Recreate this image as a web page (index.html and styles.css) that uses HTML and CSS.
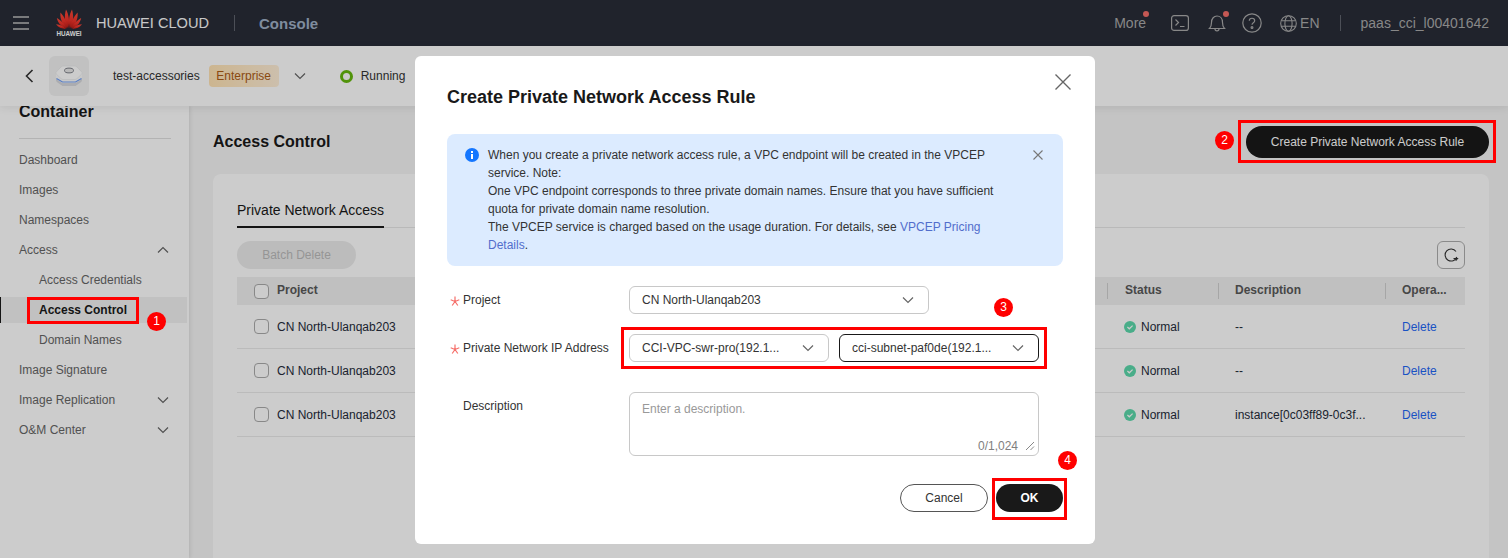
FILE: index.html
```html
<!DOCTYPE html>
<html lang="en">
<head>
<meta charset="utf-8">
<title>Create Private Network Access Rule</title>
<link rel="stylesheet" href="styles.css">
</head>
<body>
<svg class="defs" width="0" height="0" aria-hidden="true">
  <defs>
    <linearGradient id="petal-fill" x1="0" y1="0" x2="0" y2="1"><stop offset="0" stop-color="#ff4a38"/><stop offset=".55" stop-color="#f0332a"/><stop offset="1" stop-color="#b81c16"/></linearGradient>
  </defs>
  <symbol id="down" viewBox="0 0 12 8"><path d="M1 1.500 6 6.500 11 1.500" fill="none" stroke="currentColor" stroke-width="1.200"/></symbol>
  <symbol id="up" viewBox="0 0 12 8"><path d="M1 6.500 6 1.500 11 6.500" fill="none" stroke="currentColor" stroke-width="1.200"/></symbol>
  <symbol id="ok" viewBox="0 0 12 12"><circle cx="6" cy="6" r="6" fill="#5cd9ac"/><path d="M3.400 6 5.300 7.800 8.600 4.600" fill="none" stroke="#fff" stroke-width="1.200"/></symbol>
  <symbol id="req" viewBox="0 0 10 10"><path d="M5 .5v5M5 5.500.7 3.800M5 5.500 9.300 3.800M5 5.500 2.200 9.500M5 5.500 7.800 9.500" fill="none" stroke="#f66f6a" stroke-width="1.200"/></symbol>
</svg>
<div class="page">
  <header class="topbar">
    <svg class="burger" width="16" height="14" viewBox="0 0 16 14"><path d="M0 1h16M0 7h16M0 13h16" stroke="#bdbdbd" stroke-width="1.500"/></svg>
    <div class="logo">
      <svg width="26" height="20" viewBox="0 0 26 23" preserveAspectRatio="none" fill="url(#petal-fill)">
        <path d="M12.200 22C9 17 7.800 9 10 .5 12.800 6 14 15 12.200 22Z"/>
        <path d="M13.800 22C17 17 18.200 9 16 .5 13.200 6 12 15 13.800 22Z"/>
        <path d="M11.300 22C6.800 18.500 3.800 12 4.400 4 8.500 9 11.500 16 11.300 22Z"/>
        <path d="M14.700 22C19.200 18.500 22.200 12 21.600 4 17.500 9 14.500 16 14.700 22Z"/>
        <path d="M10.700 22.300C6 20.500 2 17 .8 10.300 5.300 13.500 9.500 18 10.700 22.300Z"/>
        <path d="M15.300 22.300C20 20.500 24 17 25.200 10.300 20.700 13.500 16.500 18 15.300 22.300Z"/>
        <path d="M10 22.800C6.500 23.200 2.500 21.500 0 17.500 4.500 18 8 20 10 22.800Z"/>
        <path d="M16 22.800C19.500 23.200 23.500 21.500 26 17.500 21.500 18 18 20 16 22.800Z"/>
      </svg>
      <span class="logo-word">HUAWEI</span>
    </div>
    <span class="brand">HUAWEI CLOUD</span>
    <i class="top-sep"></i>
    <span class="console">Console</span>
    <div class="top-right">
      <span class="more">More<i class="dot"></i></span>
      <svg class="ic-term" width="18" height="16" viewBox="0 0 18 16" fill="none" stroke="#aaa" stroke-width="1.200"><rect x=".6" y=".6" width="16.800" height="14.800" rx="2.500"/><path d="M4.500 4.500 7.500 7.500 4.500 10.500M9 11.500h4.500"/></svg>
      <span class="bell">
        <svg width="18" height="19" viewBox="0 0 18 19" fill="none" stroke="#aaa" stroke-width="1.200"><path d="M1.500 14.500c1.500-1.500 2-3 2-6C3.500 4.500 6 2 9 2s5.500 2.500 5.500 6.500c0 3 .5 4.500 2 6ZM7 15c0 2.500 4 2.500 4 0"/></svg>
        <i class="dot"></i>
      </span>
      <svg class="ic-help" width="20" height="20" viewBox="0 0 20 20" fill="none" stroke="#aaa" stroke-width="1.200"><circle cx="10" cy="10" r="9.200"/><path d="M7.300 7.800c0-3.400 5.400-3.400 5.400 0 0 2-2.700 2-2.700 4"/><circle cx="10" cy="14.500" r=".9"/></svg>
      <svg class="ic-globe" width="17" height="17" viewBox="0 0 17 17" fill="none" stroke="#aaa" stroke-width="1.100"><circle cx="8.500" cy="8.500" r="7.800"/><ellipse cx="8.500" cy="8.500" rx="3.600" ry="7.800"/><path d="M1.500 5.800h14M1.500 11.200h14"/></svg>
      <span class="lang">EN</span>
      <i class="top-sep right"></i>
      <span class="user">paas_cci_l00401642</span>
    </div>
  </header>

  <section class="subbar">
    <svg class="back" width="9" height="14" viewBox="0 0 9 14"><path d="M7.500 1 1.500 7 7.500 13" fill="none" stroke="#333" stroke-width="1.600"/></svg>
    <div class="instance-icon">
      <svg width="28" height="22" viewBox="0 0 28 22">
        <path d="M1 9.500v5.500q0 1.500 1.500 2.500l5 3.500h13l5-3.500q1.500-1 1.500-2.500V9.500Z" fill="#d6d8dc"/>
        <path d="M1 8v4.500q0 1.500 1.500 2.500l5 3h13l5-3q1.500-1 1.500-2.500V8Z" fill="#fbfbfb"/>
        <path d="M1.500 13.500 7.500 17h13l6-3.500" fill="none" stroke="#6f9df5" stroke-width="1.200"/>
        <path d="M8 1h12q1 0 2 1l4.800 5q1 1 0 2L22 13.500q-1 1-2 1H8q-1 0-2-1L1.200 9q-1-1 0-2L6 2q1-1 2-1Z" fill="#fff" stroke="#e4e5e8" stroke-width=".6"/>
        <ellipse cx="14" cy="5.500" rx="4.500" ry="2.400" fill="#e8e8e8" stroke="#7d8088" stroke-width="1"/>
      </svg>
    </div>
    <span class="inst-name">test-accessories</span>
    <span class="edition">Enterprise</span>
    <svg class="sub-chev" width="12" height="8"><use href="#down"/></svg>
    <i class="run-ring"></i>
    <span class="run-text">Running</span>
  </section>

  <main class="body">
    <nav class="side">
      <h2 class="side-title">Container</h2>
      <ul class="menu">
        <li class="menu-item">Dashboard</li>
        <li class="menu-item">Images</li>
        <li class="menu-item">Namespaces</li>
        <li class="menu-item">Access<svg width="12" height="8"><use href="#up"/></svg></li>
        <li class="menu-item sub">Access Credentials</li>
        <li class="menu-item sub active">Access Control</li>
        <li class="menu-item sub">Domain Names</li>
        <li class="menu-item">Image Signature</li>
        <li class="menu-item">Image Replication<svg width="12" height="8"><use href="#down"/></svg></li>
        <li class="menu-item">O&amp;M Center<svg width="12" height="8"><use href="#down"/></svg></li>
      </ul>
    </nav>
    <div class="content">
      <div class="title-row">
        <h1 class="page-title">Access Control</h1>
        <button class="btn-primary wide">Create Private Network Access Rule</button>
      </div>
      <div class="card">
        <div class="tabs"><span class="tab">Private Network Access</span></div>
        <div class="toolbar">
          <button class="btn-disabled">Batch Delete</button>
          <button class="btn-refresh" aria-label="Refresh">
            <svg width="16" height="16" viewBox="0 0 16 16" fill="none" stroke="#333" stroke-width="1.100"><path d="M13.800 10A6 6 0 1 1 13 4.500"/><path d="M10.500 11.500h4l-1.800 2.200"/></svg>
          </button>
        </div>
        <table class="grid">
          <colgroup><col class="c-check"><col class="c-project"><col class="c-status"><col class="c-desc"><col class="c-op"></colgroup>
          <thead>
            <tr><th><i class="check"></i></th><th>Project</th><th class="sep">Status</th><th class="sep tight">Description</th><th class="sep tight">Opera...</th></tr>
          </thead>
          <tbody>
            <tr><td><i class="check"></i></td><td>CN North-Ulanqab203</td><td class="pad"><svg class="ok-ic" width="12" height="12"><use href="#ok"/></svg>Normal</td><td class="pad">--</td><td class="pad"><a class="del">Delete</a></td></tr>
            <tr><td><i class="check"></i></td><td>CN North-Ulanqab203</td><td class="pad"><svg class="ok-ic" width="12" height="12"><use href="#ok"/></svg>Normal</td><td class="pad">--</td><td class="pad"><a class="del">Delete</a></td></tr>
            <tr><td><i class="check"></i></td><td>CN North-Ulanqab203</td><td class="pad"><svg class="ok-ic" width="12" height="12"><use href="#ok"/></svg>Normal</td><td class="pad">instance[0c03ff89-0c3f...</td><td class="pad"><a class="del">Delete</a></td></tr>
          </tbody>
        </table>
      </div>
    </div>
  </main>

  <div class="mask"></div>

  <div class="modal">
    <svg class="modal-close" width="16" height="16" viewBox="0 0 16 16"><path d="M.5.500l15 15M15.500.500l-15 15" stroke="#666" stroke-width="1.400"/></svg>
    <h3 class="modal-title">Create Private Network Access Rule</h3>
    <div class="alert">
      <svg class="alert-ic" width="14" height="14" viewBox="0 0 14 14"><circle cx="7" cy="7" r="7" fill="#1476ff"/><rect x="6" y="6" width="2" height="5" fill="#fff"/><rect x="6" y="3" width="2" height="2" fill="#fff"/></svg>
      <p class="alert-text">When you create a private network access rule, a VPC endpoint will be created in the VPCEP service. Note:<br>One VPC endpoint corresponds to three private domain names. Ensure that you have sufficient quota for private domain name resolution.<br>The VPCEP service is charged based on the usage duration. For details, see <a class="link">VPCEP Pricing Details</a>.</p>
      <svg class="alert-x" width="10" height="10" viewBox="0 0 10 10"><path d="M.5.500l9 9M9.500.500l-9 9" stroke="#777" stroke-width="1.100"/></svg>
    </div>
    <div class="form-row">
      <label class="lbl"><svg class="star" width="10" height="10"><use href="#req"/></svg>Project</label>
      <div class="select s-project"><span>CN North-Ulanqab203</span><svg width="12" height="8"><use href="#down"/></svg></div>
    </div>
    <div class="form-row">
      <label class="lbl"><svg class="star" width="10" height="10"><use href="#req"/></svg>Private Network IP Address</label>
      <div class="select s-half"><span>CCI-VPC-swr-pro(192.1...</span><svg width="12" height="8"><use href="#down"/></svg></div>
      <div class="select s-half focus"><span>cci-subnet-paf0de(192.1...</span><svg width="12" height="8"><use href="#down"/></svg></div>
    </div>
    <div class="form-row tall">
      <label class="lbl plain">Description</label>
      <div class="textarea">
        <span class="ph">Enter a description.</span>
        <span class="count">0/1,024
          <svg width="10" height="10" viewBox="0 0 10 10"><path d="M1 9 9 1M5.500 9 9 5.500" stroke="#888" stroke-width="1"/></svg>
        </span>
      </div>
    </div>
    <div class="modal-foot">
      <button class="btn-cancel">Cancel</button>
      <button class="btn-primary ok">OK</button>
    </div>
  </div>

  <i class="mark m1"></i><i class="mark m2"></i><i class="mark m3"></i><i class="mark m4"></i>
  <span class="badge b1">1</span><span class="badge b2">2</span><span class="badge b3">3</span><span class="badge b4">4</span>
</div>
</body>
</html>
```

FILE: styles.css
```css
* { box-sizing: border-box; }
html, body { margin: 0; height: 100%; }
body { font-family: "Liberation Sans", Arial, sans-serif; font-size: 12px; color: #252b3a; overflow: hidden; }
.defs { position: absolute; }
i { font-style: normal; }
button { font-family: inherit; cursor: pointer; }
h1, h2, h3, p, ul { margin: 0; padding: 0; }

.page { position: relative; width: 1508px; height: 558px; overflow: hidden; background: #f5f5f5; display: flex; flex-direction: column; }

/* top bar */
.topbar { flex: none; height: 46px; background: #282c38; display: flex; align-items: center; padding-left: 13px; }
.burger { flex: none; }
.logo { margin-left: 27px; width: 26px; display: flex; flex-direction: column; align-items: center; }
.logo-word { color: #fff; font-size: 6.300px; font-weight: 700; line-height: 8px; margin-top: 1px; white-space: nowrap; }
.brand { margin-left: 14px; color: #fafafa; font-size: 14.600px; }
.top-sep { width: 1px; height: 16px; background: #5f636d; margin-left: 25px; }
.console { margin-left: 24px; color: #9fb0c6; font-size: 15px; font-weight: 700; }
.top-right { margin-left: auto; display: flex; align-items: center; padding-right: 19px; color: #aaa; font-size: 14px; }
.more { position: relative; }
.dot { position: absolute; width: 6px; height: 6px; border-radius: 50%; background: #f66f6a; }
.more .dot { right: -3px; top: -4px; }
.ic-term { margin-left: 25px; }
.bell { position: relative; margin-left: 19px; display: flex; }
.bell .dot { right: -3px; top: -3px; }
.ic-help { margin-left: 16px; }
.ic-globe { margin-left: 18px; }
.lang { margin-left: 3px; }
.top-sep.right { margin-left: 20px; }
.user { margin-left: 20px; }

/* instance bar */
.subbar { flex: none; position: relative; z-index: 2; height: 60px; background: #fff; display: flex; align-items: center; padding-left: 25px; box-shadow: 0 2px 8px rgba(0,0,0,.08); color: #333; }
.instance-icon { margin-left: 15px; width: 40px; height: 40px; border-radius: 6px; background: #f2f2f2; display: flex; align-items: center; justify-content: center; }
.inst-name { margin-left: 24px; }
.edition { margin-left: 9px; height: 22px; width: 70px; border-radius: 4px; background: linear-gradient(90deg, #ffe3b4, #ffefd8); color: #ac5c16; display: flex; align-items: center; justify-content: center; }
.sub-chev { margin-left: 15px; color: #666; }
.run-ring { margin-left: 34px; width: 13px; height: 13px; border-radius: 50%; border: 3px solid #66b80d; }
.run-text { margin-left: 8px; }

/* layout */
.body { flex: 1; min-height: 0; display: flex; }
.side { flex: none; width: 189px; background: #fff; box-shadow: 1px 0 4px rgba(0,0,0,.1); position: relative; z-index: 1; }
.side-title { margin: -5px 18px 0 19px; font-size: 16px; font-weight: 700; line-height: 22px; height: 38px; color: #191919; border-bottom: 1px solid #e0e0e0; }
.menu { list-style: none; margin-top: 6px; }
.menu-item { height: 30px; padding: 0 19px; display: flex; align-items: center; justify-content: space-between; color: #666; }
.menu-item svg { color: #666; margin-right: 1px; }
.menu-item.sub { padding-left: 39px; }
.menu-item.active { margin-right: 2px; height: 26px; margin-top: 2px; margin-bottom: 2px; background: #f2f2f2; color: #191919; border-left: 1px solid #191919; padding-left: 38px; font-weight: 700; }

.content { flex: 1; min-width: 0; padding: 20px 19px 0 24px; }
.title-row { height: 32px; display: flex; align-items: center; justify-content: space-between; }
.page-title { font-size: 16px; font-weight: 700; color: #191919; }
.btn-primary { border: 0; height: 32px; border-radius: 16px; background: #191919; color: #fff; font-size: 12px; }
.btn-primary.wide { width: 243px; }
.card { margin-top: 16px; height: 420px; background: #fff; border-radius: 8px; padding: 24px; }
.tabs { height: 30px; border-bottom: 1px solid #e8e8e8; }
.tab { display: inline-block; height: 30px; font-size: 14px; line-height: 24px; color: #191919; border-bottom: 2px solid #191919; }
.toolbar { margin-top: 13px; display: flex; justify-content: space-between; }
.btn-disabled { width: 119px; height: 28px; border: 0; border-radius: 14px; background: #ececec; color: #bbb; font-size: 12px; }
.btn-refresh { width: 28px; height: 28px; padding: 0; background: #fff; border: 1px solid #adadad; border-radius: 6px; display: flex; align-items: center; justify-content: center; }

.grid { margin-top: 8px; width: 1228px; table-layout: fixed; border-collapse: separate; border-spacing: 0; }
.c-check { width: 40px; } .c-project { width: 830px; } .c-status { width: 111px; } .c-desc { width: 167px; } .c-op { width: 80px; }
.grid th { height: 28px; padding: 0 0 2px; background: #f0f0f0; text-align: left; color: #595959; font-size: 12px; font-weight: 700; }
.grid th .check { margin-top: 2px; }
.grid th.sep { padding-left: 18px; background: #f0f0f0 linear-gradient(#d0d0d0, #d0d0d0) left center / 1px 16px no-repeat; }
.grid th.sep.tight { padding-left: 17px; }
.grid td { height: 44px; padding: 0; border-bottom: 1px solid #eaeaea; color: #252b3a; white-space: nowrap; overflow: hidden; }
.grid td.pad { padding-left: 17px; }
.check { display: block; margin-left: 17px; width: 15px; height: 15px; border: 1px solid #aaa; border-radius: 4px; background: #fff; }
.ok-ic { vertical-align: -2px; margin-right: 5px; }
.del { color: #1f68f5; }

/* mask + modal */
.mask { position: absolute; inset: 0; z-index: 10; background: rgba(0,0,0,.2); }
.modal { position: absolute; z-index: 20; left: 415px; top: 56px; width: 680px; height: 488px; background: #fff; border-radius: 6px; padding: 28px 32px 0; }
.modal-close { position: absolute; right: 24px; top: 18px; }
.modal-title { font-size: 18px; font-weight: 700; color: #191919; line-height: 26px; }
.alert { margin-top: 24px; height: 132px; background: #dcebff; border-radius: 8px; padding: 12px 20px 0 18px; display: flex; align-items: flex-start; color: #333; }
.alert-ic { flex: none; margin-top: 2px; }
.alert-text { margin-left: 9px; width: 512px; line-height: 18px; }
.alert-x { margin-left: auto; margin-top: 4px; }
.link { color: #526ecc; }
.form-row { margin-top: 20px; display: flex; align-items: center; }
.form-row.tall { margin-top: 30px; align-items: flex-start; }
.lbl { flex: none; width: 182px; padding-left: 3px; display: flex; align-items: center; color: #333; height: 28px; }
.lbl.plain { padding-left: 16px; }
.star { flex: none; margin-right: 3px; margin-top: 1px; }
.select { height: 28px; border: 1px solid #c8c8c8; border-radius: 6px; padding: 0 14px 0 12px; display: flex; align-items: center; justify-content: space-between; color: #333; }
.select svg { color: #666; flex: none; }
.s-project { width: 300px; }
.s-half { width: 200px; }
.s-half + .s-half { margin-left: 10px; }
.select.focus { border-color: #191919; }
.textarea { position: relative; width: 410px; height: 64px; border: 1px solid #c8c8c8; border-radius: 6px; padding: 9px 12px; }
.ph { color: #999; line-height: 14px; display: block; }
.count { position: absolute; right: 3px; bottom: 2px; color: #808080; display: flex; align-items: center; gap: 7px; }
.modal-foot { margin-top: 28px; display: flex; justify-content: flex-end; gap: 8px; }
.btn-cancel { width: 88px; height: 28px; border: 1px solid #555; border-radius: 14px; background: #fff; color: #333; font-size: 12px; padding: 0; }
.btn-primary.ok { width: 67px; height: 28px; border-radius: 14px; font-weight: 700; }

/* annotations */
.mark { position: absolute; z-index: 30; border: 3px solid #f00; }
.m1 { left: 27px; top: 297px; width: 112px; height: 27px; }
.m2 { left: 1238px; top: 120px; width: 258px; height: 43px; }
.m3 { left: 621px; top: 327px; width: 426px; height: 42px; }
.m4 { left: 992px; top: 478px; width: 75px; height: 42px; }
.badge { position: absolute; z-index: 31; width: 19px; height: 19px; border-radius: 50%; background: #f00; color: #fff; font-size: 12px; line-height: 19px; text-align: center; }
.b1 { left: 147px; top: 312px; }
.b2 { left: 1215px; top: 131px; }
.b3 { left: 994px; top: 298px; }
.b4 { left: 1058px; top: 451px; }
```
